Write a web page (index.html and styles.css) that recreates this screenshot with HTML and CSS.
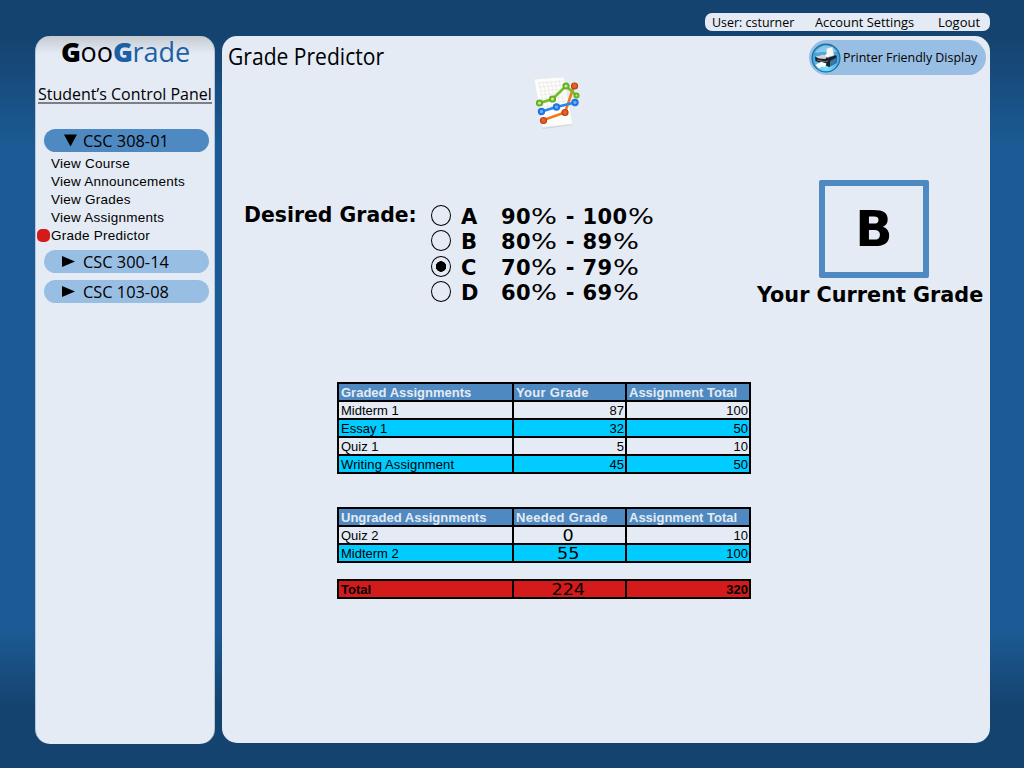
FILE: index.html
```html
<!DOCTYPE html>
<html lang="en">
<head>
<meta charset="utf-8">
<title>GooGrade - Grade Predictor</title>
<link rel="stylesheet" href="styles.css">
</head>
<body>
<nav class="account">
  <a><span class="fit f-user">User:&nbsp;csturner</span></a>
  <a><span class="fit f-settings">Account Settings</span></a>
  <a><span class="fit">Logout</span></a>
</nav>
<div class="columns">
  <aside class="sidebar">
    <div class="logo"><b>G</b>oo<span class="blue"><b>G</b>rade</span></div>
    <h2 class="panel-title"><span class="fit f-panel">Student’s Control Panel</span></h2>
    <div class="course open"><svg class="arrow" viewBox="0 0 13 13"><path d="M0 0.500H13L6.500 12.500Z"/></svg><span class="fit f-course">CSC 308-01</span></div>
    <ul class="links">
      <li>View Course</li>
      <li>View Announcements</li>
      <li>View Grades</li>
      <li>View Assignments</li>
      <li class="current">Grade Predictor</li>
    </ul>
    <div class="course"><svg class="arrow" viewBox="0 0 13 13"><path d="M0 1L13 6.500L0 12Z"/></svg><span class="fit f-course">CSC 300-14</span></div>
    <div class="course"><svg class="arrow" viewBox="0 0 13 13"><path d="M0 1L13 6.500L0 12Z"/></svg><span class="fit f-course">CSC 103-08</span></div>
  </aside>
  <main class="main">
    <header class="head">
      <h1 class="title"><span class="fit f-title">Grade Predictor</span></h1>
      <a class="print">
        <svg class="printer" viewBox="0 0 30 30">
          <defs><radialGradient id="ball" cx="50%" cy="85%" r="85%"><stop offset="0" stop-color="#7fe4fb"/><stop offset=".5" stop-color="#4db3e6"/><stop offset="1" stop-color="#3d92d0"/></radialGradient></defs>
          <circle cx="15" cy="15" r="13.900" fill="url(#ball)" stroke="#1c6c9f" stroke-width="1.200"/>
          <path d="M3.500 10Q8 2.500 15 2.500T26 9Q16 8 3.500 10Z" fill="#b6e2f8" opacity=".6"/>
          <path d="M4 13.500L13 11.500L25.500 12.500L26 19.500L18 24L14 22L4.500 18Z" fill="#1c2127"/>
          <path d="M19 18L25.500 14.500L26 19.500L19 23.500Z" fill="#3875a8"/>
          <path d="M4 13.500L12.500 11.500L16 12L14.500 16L8 15.500Z" fill="#cfd5da"/>
          <path d="M15.500 5.500L21.500 4L23 12.500L16.500 14.500L13 13.500L15.500 10.500Z" fill="#f4f6f8" stroke="#b9c4cc" stroke-width=".5"/>
          <path d="M6 17L14 18.800L17 18" fill="none" stroke="#8d959c" stroke-width=".7"/>
          <path d="M4.500 22L10 18.800L15.500 20.500L14 24L11 23.500L8 25.500Z" fill="#fff"/>
        </svg>
        <span class="fit f-print">Printer Friendly Display</span>
      </a>
    </header>
    <svg class="chart" viewBox="0 0 75 70">
      <path d="M15 15L44 13L53 60L23 64Z" fill="#b8c0cc" opacity=".5"/>
      <path d="M14 14L44 12L53 59L22.500 62.500Z" fill="#fdfdfb" stroke="#e4e6e6" stroke-width=".7"/>
      <path d="M18 18L43 16M19 22L43 20M20 26L44 24M20 30L45 28M21 34L46 32M22 38L46 36M23 42L47 40M19 17L24 43M23 17L28 43M27 16L32 42M31 16L36 42M35 16L40 42M39 15L44 41" fill="none" stroke="#e6e8df" stroke-width=".7"/>
      <path d="M23.500 55L45 47.500L54 21" fill="none" stroke="#f17a1c" stroke-width="2.600"/>
      <path d="M21.500 46.500L36.500 42L55 37.500" fill="none" stroke="#2587f0" stroke-width="2.600"/>
      <path d="M19.500 38L32.500 34L46 21L56.500 30.500" fill="none" stroke="#74bd28" stroke-width="2.600"/>
      <g fill="#e2602a" stroke="#bd400c" stroke-width="1.200"><circle cx="23.500" cy="55.500" r="3"/><circle cx="45" cy="47.500" r="3"/><circle cx="54.500" cy="21" r="3"/></g>
      <g fill="#6faaf5" stroke="#1d74e4" stroke-width="2"><circle cx="21.500" cy="46.500" r="2.700"/><circle cx="36.500" cy="42" r="2.700"/><circle cx="55" cy="37.500" r="2.700"/></g>
      <g fill="#c9e8a2" stroke="#66b01f" stroke-width="2"><circle cx="19.500" cy="38" r="2.600"/><circle cx="32.500" cy="34" r="2.600"/><circle cx="46" cy="21" r="2.600"/><circle cx="56.500" cy="30.500" r="2"/></g>
    </svg>
    <section class="grades">
      <div class="desired"><span class="fit f-desired">Desired Grade:</span></div>
      <ul class="options">
        <li><i class="radio"></i><span class="letter">A</span><span class="range">90<s>%</s> - 100<s>%</s></span></li>
        <li><i class="radio"></i><span class="letter">B</span><span class="range">80<s>%</s> - 89<s>%</s></span></li>
        <li><i class="radio on"></i><span class="letter">C</span><span class="range">70<s>%</s> - 79<s>%</s></span></li>
        <li><i class="radio"></i><span class="letter">D</span><span class="range">60<s>%</s> - 69<s>%</s></span></li>
      </ul>
      <div class="current-grade">
        <div class="box">B</div>
        <div class="caption"><span class="fit f-caption">Your Current Grade</span></div>
      </div>
    </section>
    <table class="sheet graded">
      <tr><th class="c1">Graded Assignments</th><th class="c2 wide">Your Grade</th><th class="c3">Assignment Total</th></tr>
      <tr><td>Midterm 1</td><td class="num">87</td><td class="num">100</td></tr>
      <tr class="alt"><td>Essay 1</td><td class="num">32</td><td class="num">50</td></tr>
      <tr><td>Quiz 1</td><td class="num">5</td><td class="num">10</td></tr>
      <tr class="alt"><td class="long">Writing Assignment</td><td class="num">45</td><td class="num">50</td></tr>
    </table>
    <table class="sheet ungraded">
      <tr><th class="c1">Ungraded Assignments</th><th class="c2 wide">Needed Grade</th><th class="c3">Assignment Total</th></tr>
      <tr><td>Quiz 2</td><td class="need"><span>0</span></td><td class="num">10</td></tr>
      <tr class="alt"><td>Midterm 2</td><td class="need"><span>55</span></td><td class="num">100</td></tr>
    </table>
    <table class="sheet total">
      <tr><th class="c1">Total</th><td class="c2 need"><span>224</span></td><th class="c3 num"><span class="sum">320</span></th></tr>
    </table>
  </main>
</div>
</body>
</html>
```
FILE: styles.css
```css
* { box-sizing: border-box; }
body {
  margin: 0; width: 1024px; height: 768px; overflow: hidden; color: #000;
  font-family: "Open Sans", "Noto Sans", sans-serif;
  background: linear-gradient(#15436f 0, #15436f 36px, #1b5a94 145px, #1b5a94 632px, #15436f 705px);
}
h1, h2, ul { margin: 0; padding: 0; list-style: none; }
h1, h2 { font-weight: normal; }
.fit { display: inline-block; transform-origin: 0 50%; white-space: nowrap; }
.f-user { transform: scaleX(.957); }
.f-settings { transform: scaleX(.985); }
.f-panel { transform: scaleX(.94); }
.f-course { transform: scaleX(.962); }
.f-title { transform: scaleX(.916); }
.f-print { transform: scaleX(.955); }
.f-desired { transform: scaleX(.972); }
.f-caption { transform: scaleX(.988); }
.account {
  display: flex; width: 285px; height: 18px; margin: 13px 0 0 705px; padding-left: 7px;
  background: #e4ebf4; border-radius: 7px; font-size: 13px; line-height: 18px;
}
.account a:nth-child(1) { width: 103px; }
.account a:nth-child(2) { width: 123px; }
.columns { display: flex; align-items: flex-start; gap: 7px; padding: 5px 0 0 35px; }
.sidebar {
  width: 180px; height: 708px; border-radius: 15px; border: solid #b4c6d8; border-width: 0 1px;
  background: linear-gradient(#c5cad1, #e4ebf4 18px);
}
.logo { height: 34px; padding-left: 25px; font-size: 27px; line-height: 32px; white-space: nowrap; }
.logo b { font-weight: 800; letter-spacing: -.5px; }
.blue { color: #1c5fa5; }
.panel-title {
  height: 23px; margin: 11px 2px 25px; border-bottom: 2px solid #7b7f87;
  font-size: 17px; line-height: 25px; white-space: nowrap;
}
.course {
  display: flex; align-items: center; width: 165px; height: 23px; margin: 0 0 7px 8px; padding-left: 18px;
  border-radius: 12px; background: #99bee4; font-size: 17px; line-height: 21px; white-space: nowrap;
}
.course .fit { margin-top: -1px; }
.course.open { background: #4f89c1; padding-left: 20px; margin-bottom: 3px; }
.arrow { width: 13px; height: 13px; margin-right: 8px; }
.open .arrow { margin: -1px 6px 0 0; }
.links { padding-bottom: 5px; font: 13.5px/18px "Liberation Sans", Arial, sans-serif; letter-spacing: .24px; }
.links li { padding-left: 15px; }
.links .current { display: flex; align-items: center; padding-left: 1px; }
.current::before { content: ""; width: 13px; height: 13px; margin: -2px 1px 0 0; border-radius: 5px; background: #d31b1b; }
.main { width: 768px; height: 707px; border-radius: 15px; background: #e4ebf4; }
.head { display: flex; justify-content: space-between; height: 41px; padding: 4px 4px 0 6px; }
.title { font-size: 23px; line-height: 33px; }
.print {
  display: flex; align-items: center; width: 177px; height: 35px; padding-left: 2px;
  border-radius: 18px; background: #99bee4; font-size: 13px; white-space: nowrap;
}
.print .fit { margin-top: -1px; }
.printer { width: 30px; height: 30px; margin-right: 2px; flex: none; }
.chart { display: block; width: 75px; height: 70px; margin: -12px 0 0 298px; }
.grades { display: flex; height: 236px; font: bold 21px/25px "DejaVu Sans", Verdana, sans-serif; }
.desired { width: 187px; margin: 68px 0 0 22px; }
.options { width: 325px; margin-top: 70px; }
.options li { display: flex; height: 25.3px; align-items: center; white-space: nowrap; }
.radio { width: 20px; height: 21px; margin-top: -4px; border: 1px solid #000; border-radius: 50%; }
.radio.on { background: radial-gradient(circle, #000 5px, transparent 5.5px); }
.letter { width: 50px; padding-left: 10px; font-size: 21px; }
.range { letter-spacing: .4px; }
.range s {
  display: inline-block; width: 27px; font-weight: normal; text-decoration: none;
  transform: scaleX(1.3); transform-origin: 0 50%;
}
.current-grade { width: 228px; padding-top: 45px; }
.box {
  width: 110px; height: 98px; margin-left: 63px; border: 6px solid #4f89c1; border-radius: 2px;
  font-size: 49px; line-height: 88px; text-align: center;
}
.caption { padding-left: 1px; white-space: nowrap; line-height: 34px; }
.sheet {
  width: 414px; margin-left: 115px; table-layout: fixed; border-collapse: separate; border-spacing: 2px;
  background: #000; font: 13px/15px "Liberation Sans", Arial, sans-serif;
}
.sheet th, .sheet td { height: 16px; padding: 1px 2px 0; text-align: left; background: #e4ebf4; white-space: nowrap; }
.sheet th { background: #4f89c1; color: #e4ebf4; }
.sheet .wide { letter-spacing: .3px; }
.sheet .long { letter-spacing: .12px; }
.sheet .alt td { background: #0cf; }
.sheet .num { text-align: right; padding-right: 1px; }
.sheet .need { padding: 1px 3px 0 1px; text-align: center; font: 16px/15px "DejaVu Sans", Verdana, sans-serif; }
.need span { display: inline-block; transform: scaleX(1.1); }
.sheet .c1 { width: 173px; }
.sheet .c2 { width: 111px; }
.sheet .c3 { width: 122px; }
.graded { margin-top: 11px; }
.ungraded { margin-top: 33px; }
.total { margin-top: 16px; }
.sheet.total th, .sheet.total td { background: #d31b1b; color: #000; }
```
